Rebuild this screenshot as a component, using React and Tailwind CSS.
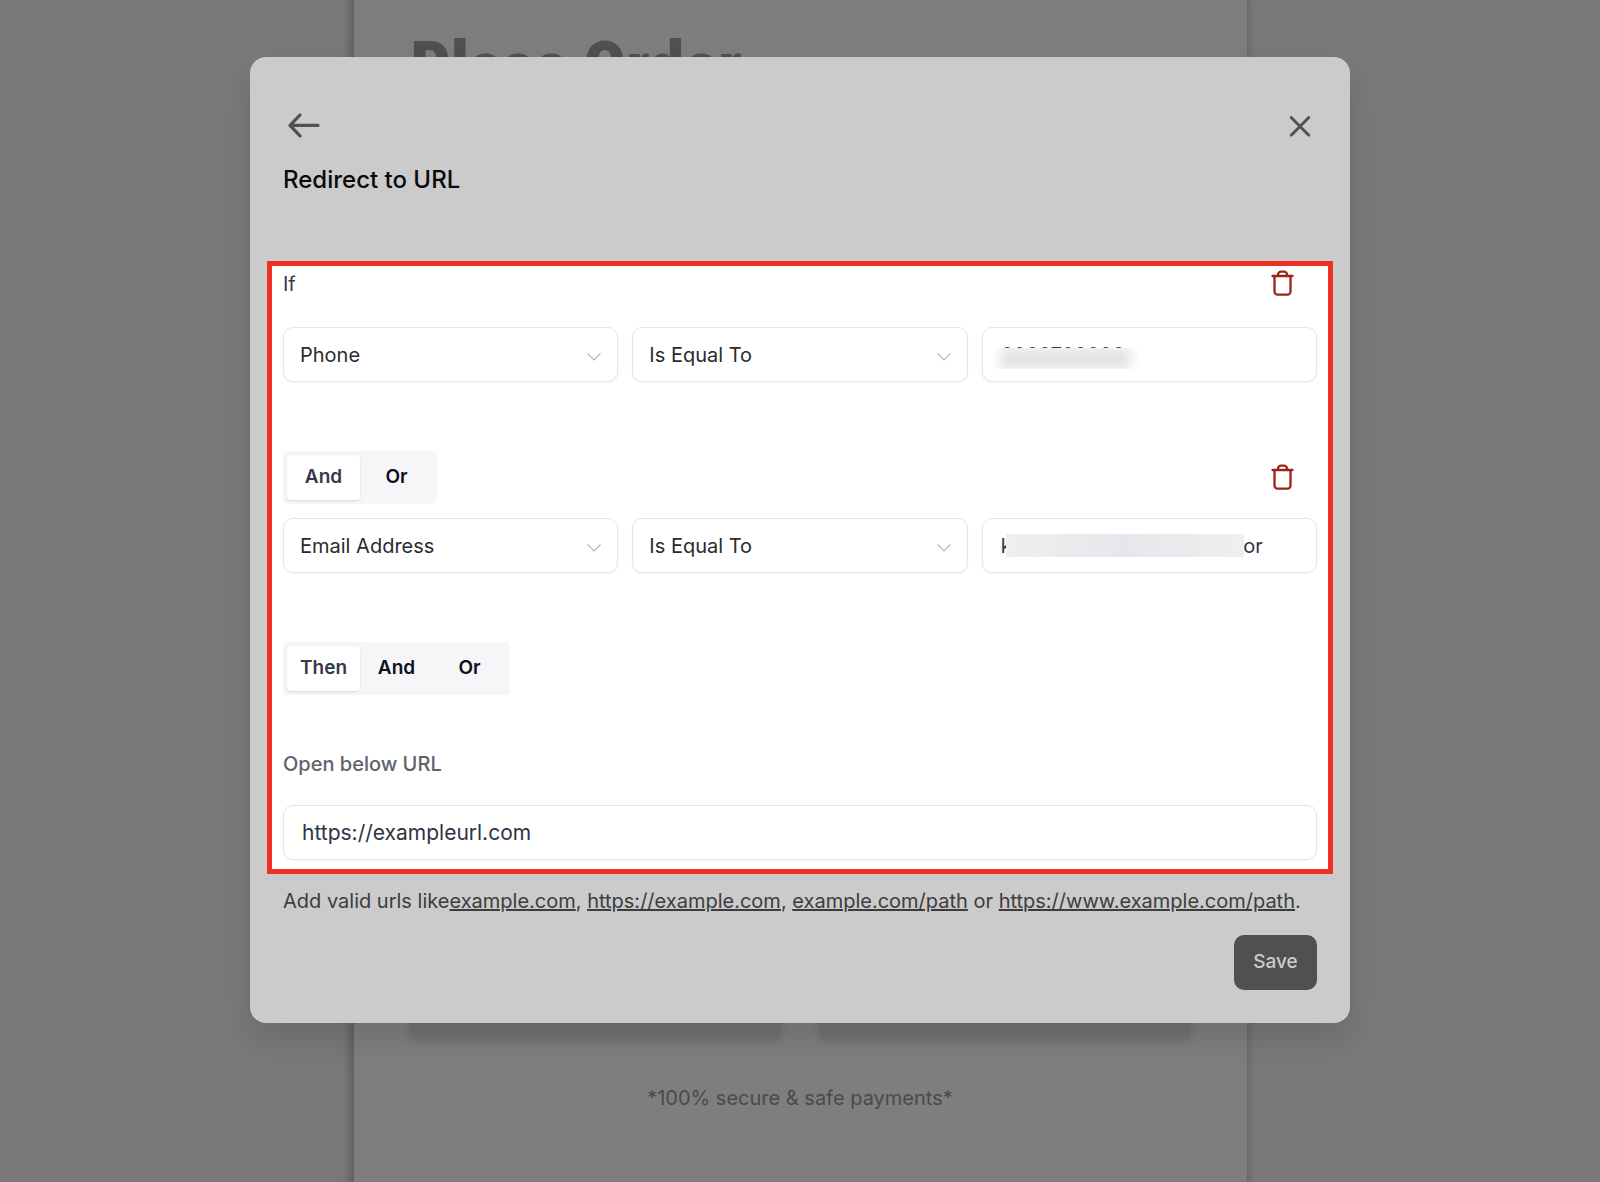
import { useState } from 'react'

const inputClass =
  'h-[55px] w-full rounded-[10px] border border-[#e6e6e8] bg-white shadow-xs outline-none'

const ArrowLeftIcon = () => (
  <svg width="34" height="28" viewBox="0 0 34 28" fill="none" stroke="currentColor" strokeWidth="3.2" strokeLinecap="round" strokeLinejoin="round">
    <path d="M31 13.4H3M13 3L3 13.4l10 10.4" />
  </svg>
)

const CloseIcon = () => (
  <svg width="24" height="24" viewBox="0 0 24 24" fill="none" stroke="currentColor" strokeWidth="2.8" strokeLinecap="round">
    <path d="M3.2 3.6l17.6 17.6M20.8 3.6L3.2 21.2" />
  </svg>
)

const TrashIcon = () => (
  <svg width="24" height="28" viewBox="0 0 24 28" fill="none" stroke="currentColor" strokeWidth="2.3" strokeLinecap="round" strokeLinejoin="round">
    <path d="M1.5 6h20M3.5 6v15.6a3 3 0 0 0 3 3h10a3 3 0 0 0 3-3V6M7 6V4.6a3 3 0 0 1 3-3h3a3 3 0 0 1 3 3V6" />
  </svg>
)

const ChevronIcon = () => (
  <svg className="pointer-events-none absolute right-4 top-[25px]" width="16" height="10" viewBox="0 0 16 10" fill="none" stroke="#b4b4b8" strokeWidth="1.2">
    <path d="M1.5 1.4L8 8l6.5-6.6" />
  </svg>
)

const SelectField = ({ label, options }) => (
  <div className="relative">
    <select aria-label={label} className={`${inputClass} appearance-none pl-4 pr-10 text-[20px] text-[#2b2b2f]`}>
      {options.map((option) => (
        <option key={option}>{option}</option>
      ))}
    </select>
    <ChevronIcon />
  </div>
)

const Toggle = ({ options, initial }) => {
  const [active, setActive] = useState(initial)

  return (
    <div className="flex w-fit rounded-[5px] bg-[#f6f6f9] p-1">
      {options.map((option) => (
        <button
          key={option}
          type="button"
          onClick={() => setActive(option)}
          className={`h-[45px] w-[73px] rounded-[4px] text-[19px] font-semibold ${
            active === option ? 'bg-white text-[#363a4a] shadow-sm' : 'text-[#0d101c]'
          }`}
        >
          {option}
        </button>
      ))}
    </div>
  )
}

const DeleteButton = () => (
  <button type="button" aria-label="Delete condition" className="mr-[22px] text-[#9b2318]">
    <TrashIcon />
  </button>
)

const App = () => {
  const [url, setUrl] = useState('https://exampleurl.com')

  return (
    <div className="relative min-h-screen bg-[#797979] font-[Inter,sans-serif]">
      <main className="mx-auto flex min-h-screen max-w-[893px] flex-col bg-[#7e7e7e] px-[57px] pt-[27px] shadow-[-2px_0_7px_3px_#606060]">
        <h1 className="font-['Roboto_Condensed',Roboto,sans-serif] text-[70px] leading-[80px] font-black text-[#505050]">
          Place Order
        </h1>
        <div className="mt-[874px] grid grid-cols-2 gap-10">
          <div className="h-[58px] rounded-md bg-[#727272] shadow-[0_0_6px_2px_#727272]" />
          <div className="h-[58px] rounded-md bg-[#727272] shadow-[0_0_6px_2px_#727272]" />
        </div>
        <p className="mt-[45px] text-center text-[20px] leading-[28px] text-[#4a4a4a]">*100% secure &amp; safe payments*</p>
      </main>

      <div className="absolute inset-0 flex items-start justify-center pt-[57px]">
        <div role="dialog" aria-label="Redirect to URL" className="w-full max-w-[1100px] rounded-[16px] bg-[#cbcbcb] px-[17px] pb-[33px] shadow-[0_16px_32px_#0000001f]">
          <div className="flex items-center justify-between px-4 pt-[55px] text-[#505050]">
            <button type="button" aria-label="Back" className="pl-1">
              <ArrowLeftIcon />
            </button>
            <button type="button" aria-label="Close" className="pr-[5px]">
              <CloseIcon />
            </button>
          </div>
          <h2 className="px-4 pt-6 text-[24px] leading-[32px] font-medium text-[#0a0a0a]">Redirect to URL</h2>

          <section className="mt-[65px] border-[5px] border-[#ee3124] bg-white px-[11px] pb-[9px]">
            <div className="flex h-[36px] items-center justify-between">
              <p className="text-[20px] text-[#363a4a]">If</p>
              <DeleteButton />
            </div>
            <div className="mt-[25px] grid grid-cols-3 gap-[14px]">
              <SelectField label="Field" options={['Phone', 'Email Address']} />
              <SelectField label="Comparison" options={['Is Equal To', 'Is Not Equal To']} />
              <div className="relative">
                <input aria-label="Value" defaultValue="0000700000" className={`${inputClass} px-[18px] text-[20px] text-[#363a4a]`} />
                <div className="absolute top-[21px] left-[10px] h-[21px] w-[146px] overflow-hidden bg-white">
                  <div className="mx-2 h-full bg-[#e0e2e4] blur-[6px]" />
                </div>
              </div>
            </div>

            <div className="mt-[69px] flex items-center justify-between">
              <Toggle options={['And', 'Or']} initial="And" />
              <DeleteButton />
            </div>
            <div className="mt-[14px] grid grid-cols-3 gap-[14px]">
              <SelectField label="Field" options={['Email Address', 'Phone']} />
              <SelectField label="Comparison" options={['Is Equal To', 'Is Not Equal To']} />
              <div className="relative">
                <input aria-label="Value" defaultValue="knnnnnnnnnnnnnnnnnnnror" className={`${inputClass} px-[18px] text-[20px] text-[#2f3342]`} />
                <div className="absolute top-[16px] left-[24px] h-[23px] w-[238px] bg-linear-to-r from-[#eeeff1] via-[#e6e7ea] to-[#eeeff1]" />
              </div>
            </div>

            <div className="mt-[69px]">
              <Toggle options={['Then', 'And', 'Or']} initial="Then" />
            </div>

            <label htmlFor="redirect-url" className="mt-[54px] block text-[20px] leading-[30px] font-medium text-[#60636d]">
              Open below URL
            </label>
            <input
              id="redirect-url"
              value={url}
              onChange={(e) => setUrl(e.target.value)}
              className={`${inputClass} mt-[26px] px-[18px] text-[21px] text-[#2f3342]`}
            />
          </section>

          <p className="px-4 pt-[11px] text-[20px] leading-[32px] text-[#3d3d3d]">
            Add valid urls like
            <a href="#example" className="underline">example.com</a>,{' '}
            <a href="#example" className="underline">https://example.com</a>,{' '}
            <a href="#example" className="underline">example.com/path</a> or{' '}
            <a href="#example" className="underline">https://www.example.com/path</a>.
          </p>
          <div className="flex justify-end px-4 pt-[18px]">
            <button type="button" className="h-[55px] w-[83px] rounded-[10px] bg-[#505050] text-[19px] font-medium text-[#cbcbcb]">
              Save
            </button>
          </div>
        </div>
      </div>
    </div>
  )
}

export default App
